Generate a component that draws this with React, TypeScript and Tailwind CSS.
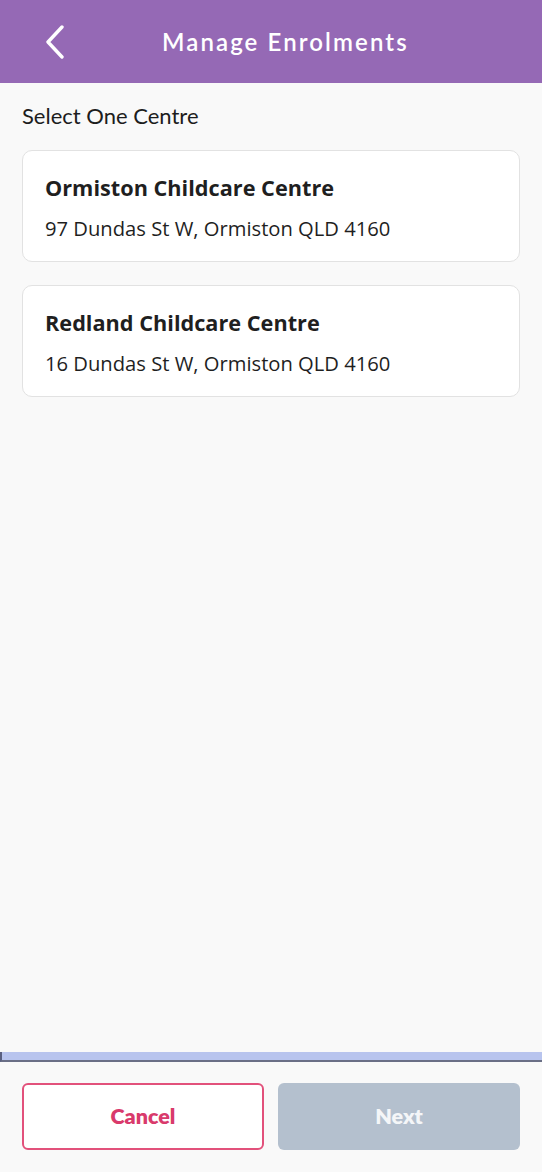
const centres = [
  { name: "Ormiston Childcare Centre", address: "97 Dundas St W, Ormiston QLD 4160" },
  { name: "Redland Childcare Centre", address: "16 Dundas St W, Ormiston QLD 4160" },
];

export default function App() {
  return (
    <div className="flex h-[1172px] w-[542px] flex-col bg-[#f9f9f9]">
      {/* header */}
      <div className="flex h-[83px] shrink-0 items-center bg-[#9569b5] pl-[44px] font-['Lato',sans-serif] text-white">
        <svg width="22" height="34" viewBox="0 0 22 34" fill="none">
          <path d="M18 2 L4 17 L18 32" stroke="white" strokeWidth="3.4" strokeLinecap="round" strokeLinejoin="round" />
        </svg>
        <div className="ml-[96px] text-[24px] font-semibold tracking-[2.1px]">Manage Enrolments</div>
      </div>

      <div className="flex flex-1 flex-col px-[22px]">
        <p className="mt-[19px] font-['Lato',sans-serif] text-[22px] leading-[28px] text-[#1d1d1d]">Select One Centre</p>
        <div className="mt-[20px] flex flex-col gap-[23px]">
          {centres.map((c) => (
            <div
              key={c.name}
              className="flex h-[112px] flex-col justify-center rounded-[10px] border border-[#e2e2e2] bg-white px-[22px] pt-[2px] font-['Open_Sans',sans-serif] text-[#1f1f1f]"
            >
              <div className="text-[21.7px] font-bold leading-[28px]">{c.name}</div>
              <div className="mt-[13px] text-[20.2px] leading-[26px]">{c.address}</div>
            </div>
          ))}
        </div>
      </div>

      {/* progress strip */}
      <div className="h-[10px] shrink-0 border-b-2 border-l-2 border-[#6a6f86] border-l-[#5a6080] bg-[#b8c4ee]" />

      <div className="flex shrink-0 justify-between px-[22px] pb-[22px] pt-[21px] font-['Lato',sans-serif] text-[21.5px] font-extrabold">
        <button className="h-[67px] w-[242px] rounded-[6px] border-2 border-[#e2517b] bg-white text-[#d93a6c]">Cancel</button>
        <button className="h-[67px] w-[242px] rounded-[6px] bg-[#b4c0ce] text-[#f4f6f8]">Next</button>
      </div>
    </div>
  );
}
